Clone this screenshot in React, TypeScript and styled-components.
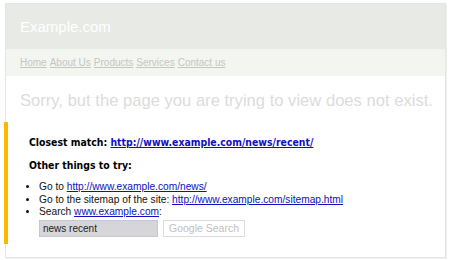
import styled, { createGlobalStyle } from "styled-components";

const GlobalStyle = createGlobalStyle`
  html, body {
    margin: 0;
    padding: 0;
    background: #fff;
  }
  body {
    font-family: "Liberation Sans", Arial, sans-serif;
  }
`;

const navLinks = ["Home", "About Us", "Products", "Services", "Contact us"];

const App = () => {
  return (
    <Page>
      <GlobalStyle />
      <Card>
        <Header>Example.com</Header>
        <Nav>
          {navLinks.map((label) => (
            <NavLink key={label} href="#">
              {label}
            </NavLink>
          ))}
        </Nav>
        <Sorry>Sorry, but the page you are trying to view does not exist.</Sorry>
        <Suggest>
          <Heading $gap={11}>
            Closest match: <Link href="#">http://www.example.com/news/recent/</Link>
          </Heading>
          <Heading $gap={10}>Other things to try:</Heading>
          <List>
            <li>
              Go to <Link href="#">http://www.example.com/news/</Link>
            </li>
            <li>
              Go to the sitemap of the site: <Link href="#">http://www.example.com/sitemap.html</Link>
            </li>
            <li>
              Search <Link href="#">www.example.com</Link>:
              <SearchRow>
                <SearchInput defaultValue="news recent" />
                <SearchButton>Google Search</SearchButton>
              </SearchRow>
            </li>
          </List>
        </Suggest>
      </Card>
    </Page>
  );
};

const Page = styled.div`
  width: 450px;
  height: 260px;
  padding: 3px 0 0 5px;
  box-sizing: border-box;
`;

const Card = styled.div`
  width: 441px;
  height: 255px;
  box-sizing: border-box;
  border: 1px solid #e4e4e4;
  box-shadow: 1px 1px 0 #f0f0f0;
  background: #fff;
`;

const Header = styled.div`
  height: 45px;
  background: #e8eae6;
  color: #fff;
  font-size: 15px;
  line-height: 45px;
  padding-left: 14px;
`;

const Nav = styled.div`
  height: 27px;
  background: #f3f5f0;
  display: flex;
  align-items: center;
  gap: 3px;
  padding-left: 14px;
`;

const NavLink = styled.a`
  color: #c4c6c2;
  font-size: 10px;
  text-decoration: underline;
`;

const Sorry = styled.div`
  color: #dcdcdc;
  font-size: 16.6px;
  padding: 15px 0 0 14px;
  height: 31px;
  white-space: nowrap;
`;

const Suggest = styled.div`
  margin-left: -2px;
  border-left: 4px solid #fbb800;
  padding: 14px 0 6px 21px;
  height: 102px;
`;

const Heading = styled.div<{ $gap: number }>`
  font-family: "DejaVu Sans Condensed", "DejaVu Sans", Verdana, sans-serif;
  font-weight: bold;
  font-size: 10.4px;
  color: #000;
  line-height: 12px;
  margin-bottom: ${(p) => p.$gap}px;
`;

const Link = styled.a`
  color: #1010c0;
  text-decoration: underline;
`;

const List = styled.ul`
  margin: 0;
  padding: 0 0 0 10px;
  font-size: 10.2px;
  line-height: 12.5px;
  color: #111;
  list-style: disc;
`;

const SearchRow = styled.div`
  display: flex;
  gap: 5px;
  margin-top: 1px;
`;

const SearchInput = styled.input`
  width: 119px;
  height: 17px;
  box-sizing: border-box;
  border: 1px solid #c8c8cc;
  background: #d6d6da;
  font-family: "Liberation Sans", Arial, sans-serif;
  font-size: 10px;
  color: #222;
  padding: 0 3px;
`;

const SearchButton = styled.button`
  width: 82px;
  height: 17px;
  box-sizing: border-box;
  border: 1px solid #dcdcdc;
  background: #fff;
  color: #c0c0c0;
  font-family: "Liberation Sans", Arial, sans-serif;
  font-size: 10.5px;
  padding: 0;
`;

export default App;
